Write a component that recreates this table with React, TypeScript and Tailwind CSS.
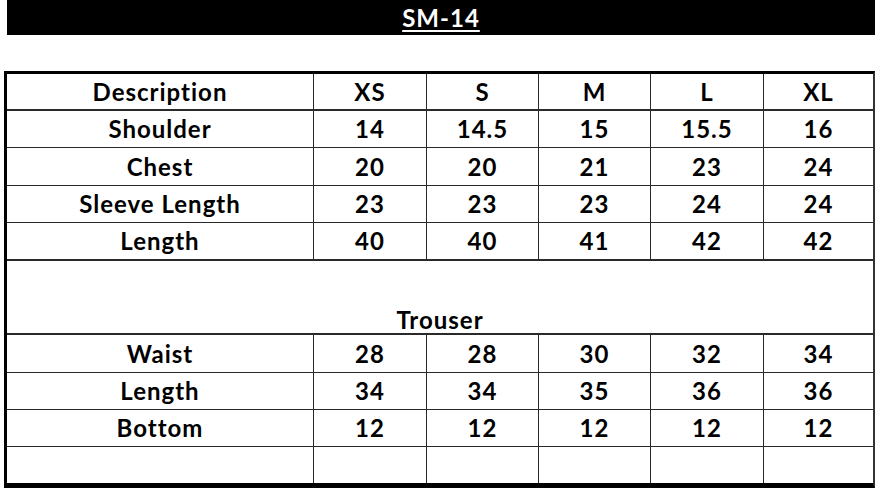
import React from "react";

const sizes = ["XS", "S", "M", "L", "XL"];

const top = [
  { label: "Shoulder", values: ["14", "14.5", "15", "15.5", "16"], h: "h-[37px]", b: "border-b" },
  { label: "Chest", values: ["20", "20", "21", "23", "24"], h: "h-[38px]", b: "border-b" },
  { label: "Sleeve Length", values: ["23", "23", "23", "24", "24"], h: "h-[37px]", b: "border-b" },
  { label: "Length", values: ["40", "40", "41", "42", "42"], h: "h-[38px]", b: "border-b-2" },
];

const trouser = [
  { label: "Waist", values: ["28", "28", "30", "32", "34"], h: "h-[38px]", b: "border-b" },
  { label: "Length", values: ["34", "34", "35", "36", "36"], h: "h-[37px]", b: "border-b" },
  { label: "Bottom", values: ["12", "12", "12", "12", "12"], h: "h-[37px]", b: "border-b" },
  { label: "", values: ["", "", "", "", ""], h: "h-[36px]", b: "" },
];

const cols = "grid grid-cols-[306px_113px_112px_112px_113px_110px]";

const Row = ({ label, values, h, b }: { label: string; values: string[]; h: string; b: string }) => (
  <div className={`${cols} ${h} ${b} border-[#2a2a2a]`}>
    <div className="flex items-center justify-center">{label}</div>
    {values.map((v, i) => (
      <div key={i} className="flex items-center justify-center border-l border-[#2a2a2a]">
        {v}
      </div>
    ))}
  </div>
);

const App = () => {
  return (
    <div className="w-[877px] h-[488px] overflow-hidden bg-white text-black font-['Lato',sans-serif] font-bold text-[24px] tracking-[1px]">
      <div className="ml-[7px] w-[868px] h-[35px] bg-black flex items-center justify-center">
        <span className="text-white underline decoration-2 underline-offset-[3px] leading-none">SM-14</span>
      </div>

      <div className="mt-[36px] ml-[4px] w-[871px] border-l-[3px] border-t-[3px] border-r-2 border-b-[6px] border-black border-r-[#333]">
        <Row label="Description" values={sizes} h="h-[37px]" b="border-b-2" />
        {top.map((r) => (
          <Row key={r.label} {...r} />
        ))}
        <div className="h-[74px] border-b-2 border-[#2a2a2a] flex items-end justify-center pb-[1px] leading-none">
          Trouser
        </div>
        {trouser.map((r, i) => (
          <Row key={i} {...r} />
        ))}
      </div>
    </div>
  );
};

export default App;
